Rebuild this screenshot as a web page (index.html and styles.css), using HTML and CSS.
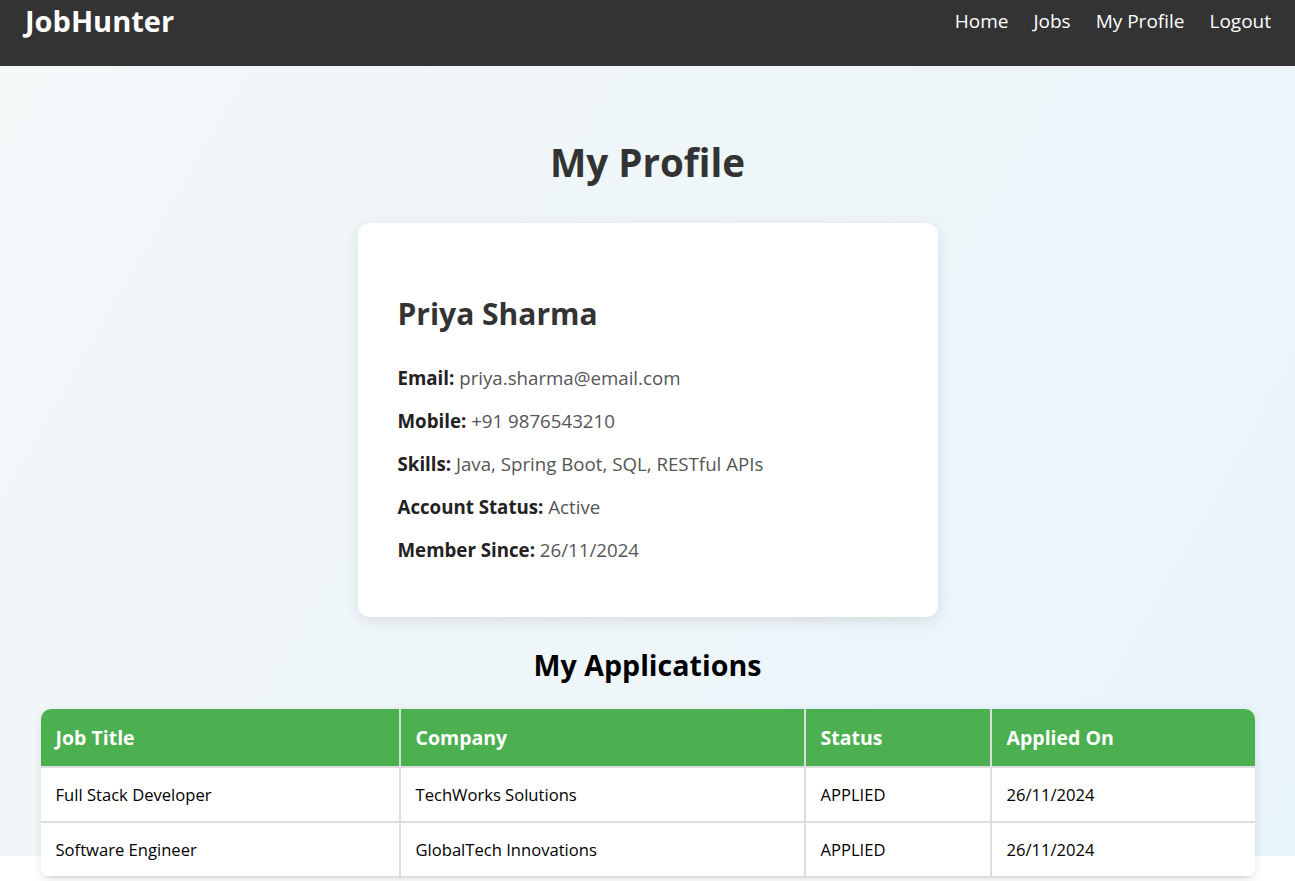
FILE: index.html
```html
<!DOCTYPE html>
<html lang="en">
<head>
<meta charset="utf-8">
<title>JobHunter - My Profile</title>
<link rel="stylesheet" href="styles.css">
</head>
<body>
<header class="navbar">
  <div class="logo">JobHunter</div>
  <nav class="nav-links">
    <a href="#">Home</a>
    <a href="#">Jobs</a>
    <a href="#">My Profile</a>
    <a href="#">Logout</a>
  </nav>
</header>
<main class="page">
  <h1 class="page-title">My Profile</h1>
  <section class="profile-card">
    <h2 class="profile-name">Priya Sharma</h2>
    <p class="field"><strong>Email:</strong> priya.sharma@email.com</p>
    <p class="field"><strong>Mobile:</strong> +91 9876543210</p>
    <p class="field"><strong>Skills:</strong> Java, Spring Boot, SQL, RESTful APIs</p>
    <p class="field"><strong>Account Status:</strong> Active</p>
    <p class="field"><strong>Member Since:</strong> 26/11/2024</p>
  </section>
  <h2 class="section-title">My Applications</h2>
  <table class="apps">
    <colgroup>
      <col class="c1"><col class="c2"><col class="c3"><col class="c4">
    </colgroup>
    <thead>
      <tr><th>Job Title</th><th>Company</th><th>Status</th><th>Applied On</th></tr>
    </thead>
    <tbody>
      <tr><td>Full Stack Developer</td><td>TechWorks Solutions</td><td>APPLIED</td><td>26/11/2024</td></tr>
      <tr><td>Software Engineer</td><td>GlobalTech Innovations</td><td>APPLIED</td><td>26/11/2024</td></tr>
    </tbody>
  </table>
</main>
</body>
</html>
```
FILE: styles.css
```css
* { box-sizing: border-box; }
html, body { margin: 0; padding: 0; }
body {
  background: #ffffff;
  font-family: "Open Sans", "Noto Sans", sans-serif;
  color: #333;
}
.navbar {
  height: 66px;
  background: #333333;
  display: flex;
  justify-content: space-between;
  align-items: flex-start;
  padding: 2px 24px 0 25px;
}
.logo {
  color: #fff;
  font-weight: 700;
  font-size: 29px;
  line-height: 38px;
}
.nav-links {
  display: flex;
  gap: 25px;
  padding-top: 2px;
}
.nav-links a {
  color: #fff;
  text-decoration: none;
  font-size: 19px;
  line-height: 34px;
}
.page {
  background-color: #ffffff;
  background-image: linear-gradient(120deg, #f3f8f9 0%, #eef6f9 55%, #e8f4fb 100%);
  background-size: 100% 790px;
  background-repeat: no-repeat;
  background-position: top left;
  padding: 72px 40px 40px;
  display: flex;
  flex-direction: column;
  align-items: center;
}
.page > * { flex-shrink: 0; }
.page-title {
  margin: 0;
  font-size: 38.6px;
  line-height: 48px;
  font-weight: 700;
  color: #333;
}
.profile-card {
  margin-top: 37px;
  width: 580px;
  background: #fff;
  border-radius: 12px;
  box-shadow: 0 4px 16px rgba(0, 0, 0, 0.1);
  padding: 73px 40px 54px;
}
.profile-name {
  margin: 0 0 32px;
  font-size: 30px;
  line-height: 36px;
  font-weight: 700;
  color: #333;
}
.field {
  margin: 16px 0 0;
  font-size: 18.7px;
  line-height: 27px;
  color: #555;
}
.field:first-of-type { margin-top: 0; }
.field strong { color: #222; font-weight: 700; }
.section-title {
  margin: 30px 0 0;
  font-size: 28.6px;
  line-height: 36px;
  font-weight: 700;
  color: #000;
}
.apps {
  margin-top: 26px;
  width: 1214px;
  border-collapse: collapse;
  table-layout: fixed;
  background: #fff;
  border-radius: 10px;
  overflow: hidden;
  box-shadow: 0 2px 10px rgba(0, 0, 0, 0.1);
}
.c1 { width: 359px; }
.c2 { width: 405px; }
.c3 { width: 186px; }
.c4 { width: 264px; }
.apps th, .apps td {
  text-align: left;
  line-height: 27px;
  border: 2px solid #dddddd;
}
.apps th {
  background: #4caf50;
  color: #fff;
  font-weight: 700;
  font-size: 19.5px;
  padding: 15px 15px;
  border-top: none;
}
.apps th:first-child, .apps td:first-child { border-left: none; }
.apps th:last-child, .apps td:last-child { border-right: none; }
.apps td {
  color: #000;
  font-size: 16.6px;
  padding: 13px 15px;
}
```
